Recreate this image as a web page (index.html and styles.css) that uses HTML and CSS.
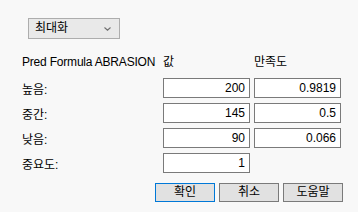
FILE: index.html
```html
<!DOCTYPE html>
<html>
<head>
<meta charset="utf-8">
<link rel="stylesheet" href="styles.css">
</head>
<body>
<div class="page">
  <div class="select">
    <span class="select-text">최대화</span>
    <svg class="chev" width="7" height="4" viewBox="0 0 7 4"><path d="M0.5 0.5 L3.5 3.2 L6.5 0.5" fill="none" stroke="#707070" stroke-width="1.1"/></svg>
  </div>
  <div class="grid">
    <div class="hdr label title">Pred Formula ABRASION</div>
    <div class="hdr">값</div>
    <div class="hdr">만족도</div>

    <div class="label">높음:</div>
    <div class="box">200</div>
    <div class="box">0.9819</div>

    <div class="label">중간:</div>
    <div class="box">145</div>
    <div class="box">0.5</div>

    <div class="label">낮음:</div>
    <div class="box">90</div>
    <div class="box">0.066</div>

    <div class="label">중요도:</div>
    <div class="box">1</div>
    <div></div>
  </div>
  <div class="buttons">
    <div class="btn default">확인</div>
    <div class="btn">취소</div>
    <div class="btn">도움말</div>
  </div>
</div>
</body>
</html>
```
FILE: styles.css
```css
html, body {
  margin: 0;
  padding: 0;
  background: #f8f8f8;
}
body {
  font-family: "Liberation Sans", "Noto Sans CJK KR", sans-serif;
  font-size: 12px;
  color: #000;
  width: 358px;
  height: 212px;
  overflow: hidden;
}
.page {
  padding: 18px 0 0 22px;
}
.select {
  margin-left: 6px;
  height: 19px;
  border: 1px solid #adadad;
  background: #e9e9e9;
  display: flex;
  align-items: center;
  justify-content: space-between;
  padding: 0 8px 0 6px;
  box-sizing: content-box;
  width: 76px;
}
.select-text {
  font-size: 12px;
  line-height: 19px;
}
.chev {
  display: block;
}
.grid {
  margin-top: 15px;
  display: grid;
  grid-template-columns: 137px 87px 87px;
  grid-template-rows: 19px repeat(4, 20px);
  column-gap: 4px;
  row-gap: 5px;
}
.hdr {
  line-height: 16px;
  align-self: start;
  display: block;
}
.label {
  display: flex;
  align-items: center;
  white-space: nowrap;
}
.hdr.label {
  display: block;
}
.title {
  letter-spacing: -0.2px;
}
.box {
  box-sizing: border-box;
  height: 20px;
  border: 1px solid #7a7a7a;
  background: #fff;
  text-align: right;
  padding: 0 4px;
  line-height: 18px;
}
.buttons {
  margin-top: 10px;
  margin-left: 133px;
  display: flex;
  gap: 4px;
}
.btn {
  box-sizing: border-box;
  width: 60px;
  height: 19px;
  border: 1px solid #7a7a7a;
  background: #e1e1e1;
  text-align: center;
  line-height: 17px;
}
.btn.default {
  border-color: #0078d7;
}
```
